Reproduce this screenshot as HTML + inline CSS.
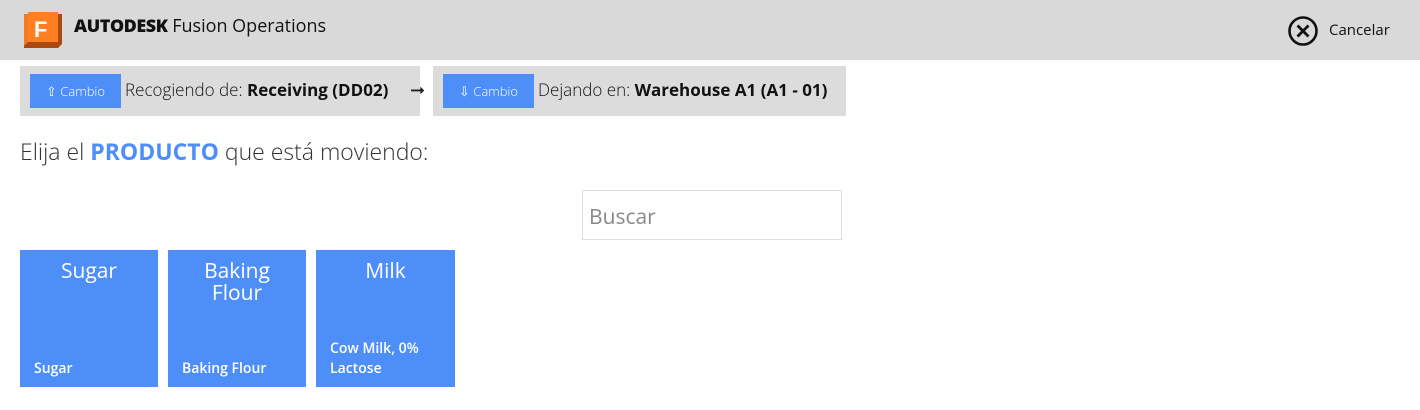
<!DOCTYPE html>
<html><head><meta charset="utf-8"><style>
*{margin:0;padding:0;box-sizing:border-box}
body{width:1420px;height:410px;background:#fff;font-family:"Open Sans","Liberation Sans","DejaVu Sans",sans-serif;position:relative;overflow:hidden;color:#222}
.hdr{position:absolute;left:0;top:0;width:1420px;height:60px;background:#d9d9d9}
.logo{position:absolute;left:20px;top:10px;width:44px;height:40px}
.brand{position:absolute;left:74px;top:14px;font-size:18px;color:#111;white-space:nowrap}
.brand b{font-weight:800;letter-spacing:-0.5px}
.cancel{position:absolute;left:1287px;top:15px;font-size:15px;color:#111}
.cancel span{position:absolute;left:42px;top:5px;white-space:nowrap}
.bar{position:absolute;top:66px;height:50px;background:#dcdcdc;font-size:17px;white-space:nowrap;font-weight:300;color:#111}
.bar b{font-weight:700}
.btn{position:absolute;top:8px;height:34px;width:91px;background:#4d8ef8;color:#fff;font-size:13px;line-height:34px;text-align:center}
.bar .t{position:absolute;left:105px;top:12px}
.arrow{position:absolute;left:410px;top:78px;font-size:18px}
h2{position:absolute;left:20px;top:135px;font-size:23px;font-weight:300;color:#333}
h2 b{color:#4d8ef8;font-weight:700}
.search{position:absolute;left:582px;top:190px;width:260px;height:50px;border:1px solid #ddd;font-size:21px;color:#888;padding:12px 6px}
.tile{position:absolute;top:250px;width:138px;height:137px;background:#4d8ef8;color:#fff}
.tile .n{position:absolute;left:0;right:0;top:10px;text-align:center;font-size:21px;line-height:22px;font-weight:400}
.tile .s{position:absolute;left:14px;bottom:8px;font-size:14px;font-weight:600;line-height:20px}
</style></head><body>
<div class="hdr">
<svg class="logo" viewBox="0 0 44 40"><path d="M4 8 L8 4 H42 V34 L38 38 H4Z" fill="#a94b10"/><path d="M4 4 H38 V32 H8 L4 36Z" fill="#f47a1f"/><path d="M8 2 H38 V32 H8Z" fill="#ff7f22"/><text x="14" y="27" font-family="Liberation Sans" font-weight="bold" font-size="22" fill="#fff">F</text></svg>
<div class="brand"><b>AUTODESK</b> Fusion Operations</div>
<div class="cancel"><svg width="32" height="32" viewBox="0 0 32 32"><circle cx="16" cy="16" r="13.5" fill="none" stroke="#111" stroke-width="2.6"/><path d="M10.5 10.5L21.5 21.5M21.5 10.5L10.5 21.5" stroke="#111" stroke-width="2.8"/></svg><span>Cancelar</span></div>
</div>
<div class="bar" style="left:20px;width:400px"><div class="btn" style="left:10px">⇧ Cambio</div><div class="t">Recogiendo de: <b>Receiving (DD02)</b></div></div>
<div class="arrow">➞</div>
<div class="bar" style="left:433px;width:413px"><div class="btn" style="left:10px">⇩ Cambio</div><div class="t">Dejando en: <b>Warehouse A1 (A1 - 01)</b></div></div>
<h2>Elija el <b>PRODUCTO</b> que está moviendo:</h2>
<div class="search">Buscar</div>
<div class="tile" style="left:20px"><div class="n">Sugar</div><div class="s">Sugar</div></div>
<div class="tile" style="left:168px"><div class="n">Baking<br>Flour</div><div class="s">Baking Flour</div></div>
<div class="tile" style="left:316px;width:139px"><div class="n">Milk</div><div class="s">Cow Milk, 0%<br>Lactose</div></div>
</body></html>
